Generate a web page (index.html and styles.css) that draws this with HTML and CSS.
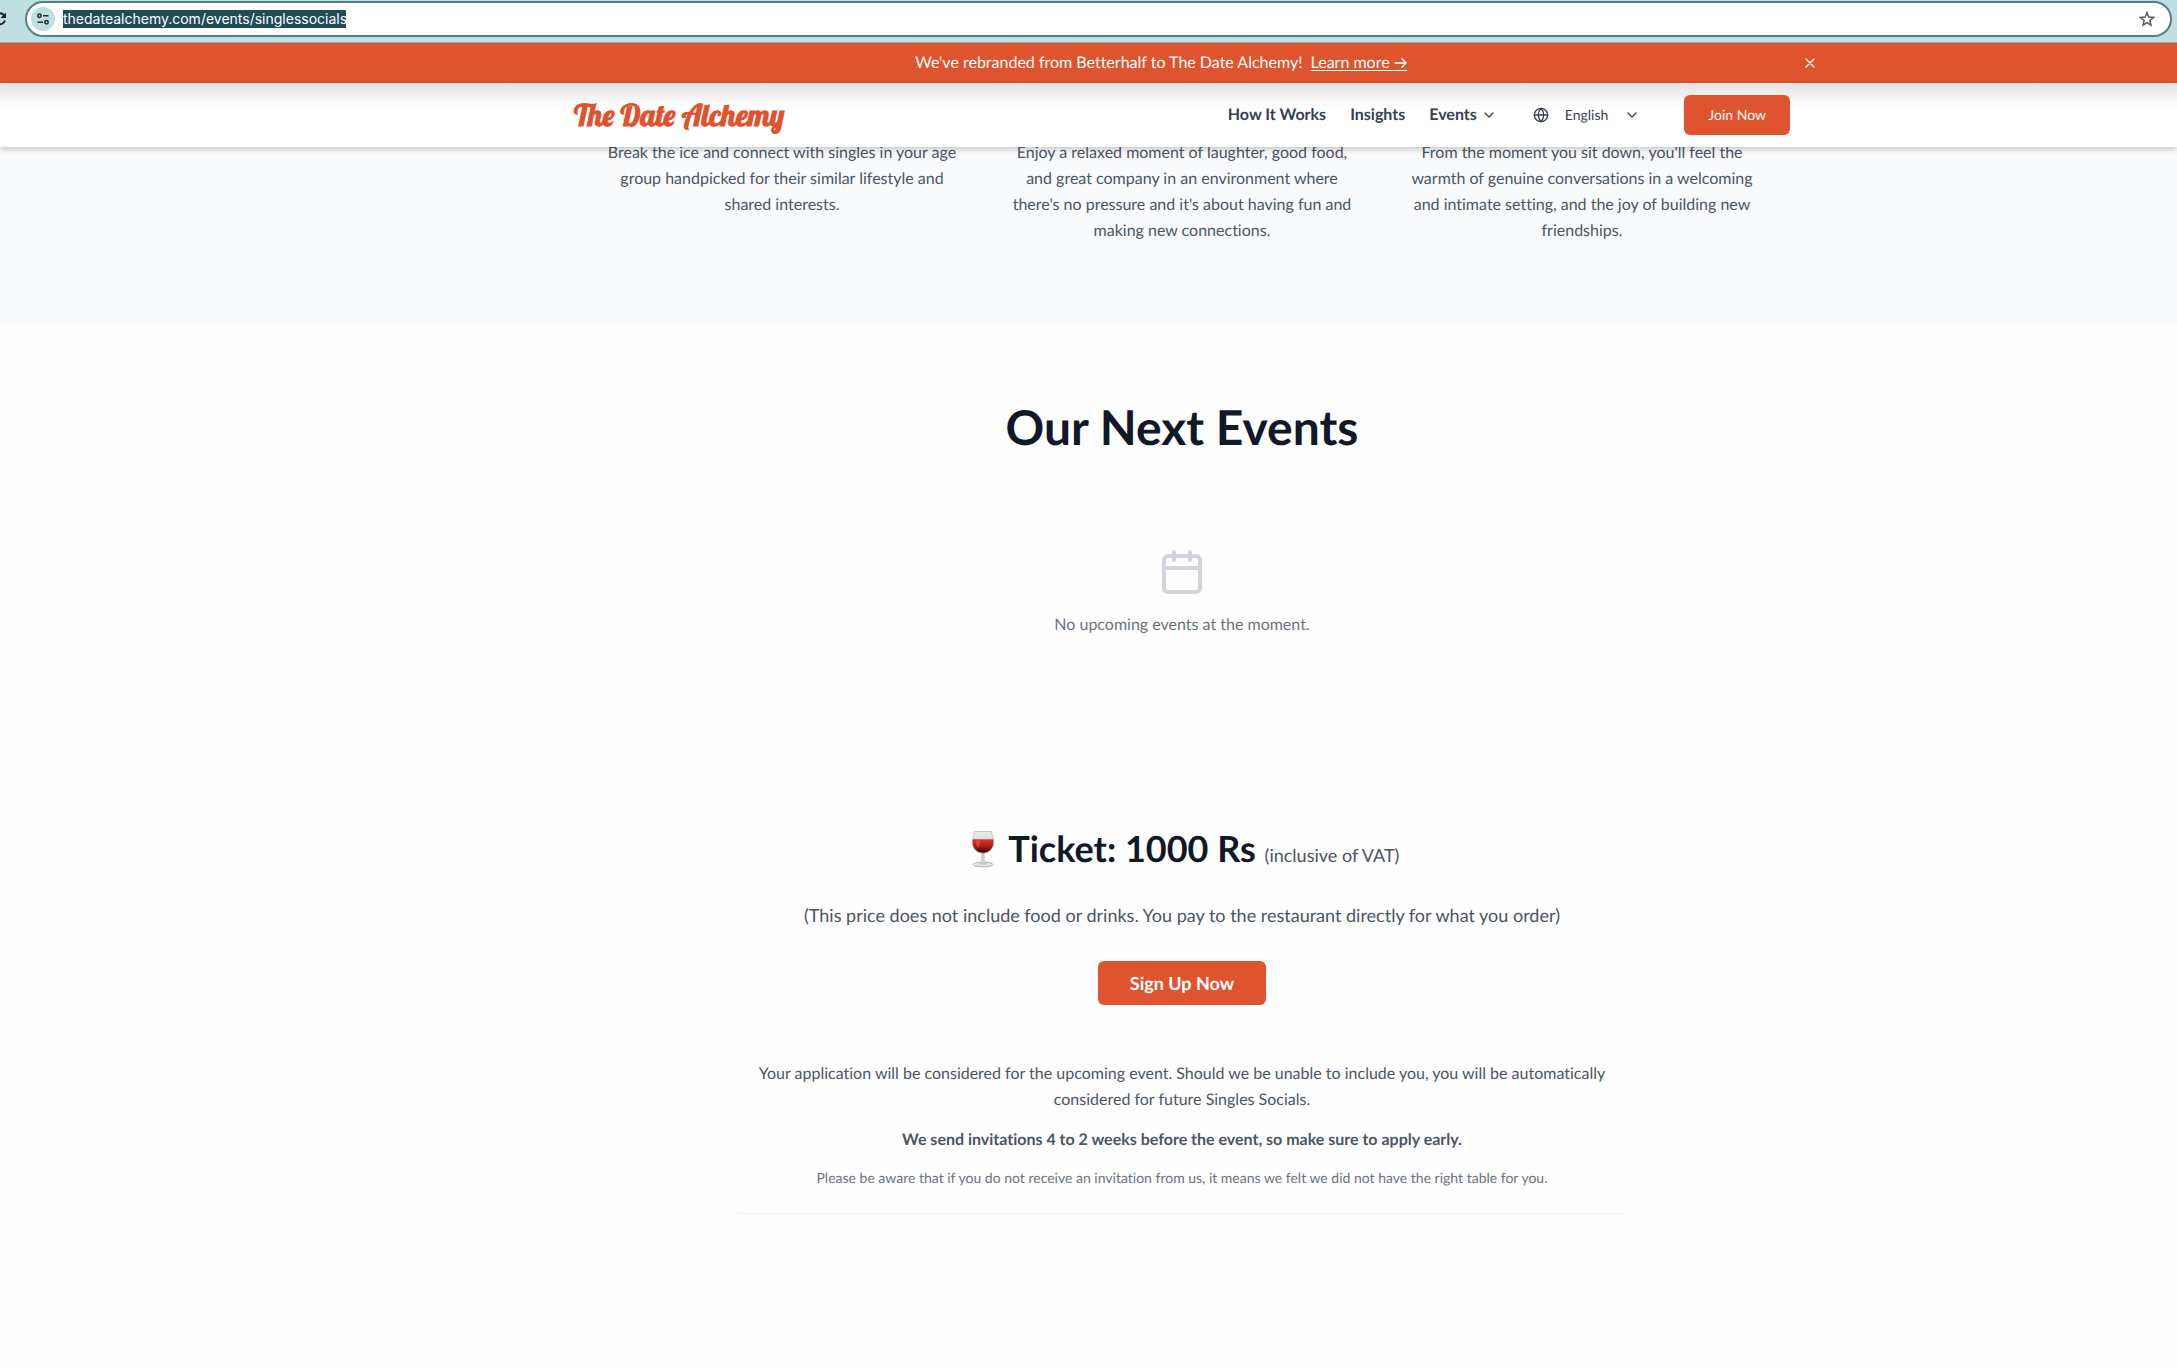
FILE: index.html
```html
<!DOCTYPE html>
<html lang="en">
<head>
<meta charset="utf-8">
<title>Singles Socials | The Date Alchemy</title>
<link rel="stylesheet" href="styles.css">
</head>
<body>
<div class="toolbar">
  <button class="reload" aria-label="Reload">
    <svg width="16" height="16" viewBox="0 0 16 16" fill="none" stroke="#1f1f1f" stroke-width="2"><path d="M13 9.500A5.500 5.500 0 1 1 12 4.200"/><path d="M14 1.500v5.500H8.500z" fill="#1f1f1f" stroke="none"/></svg>
  </button>
  <div class="omnibox">
    <button class="site-info" aria-label="Site information">
      <svg width="14" height="14" viewBox="0 0 14 14" fill="none" stroke="#1f2a2c" stroke-width="1.500"><circle cx="3.500" cy="3.800" r="1.700"/><path d="M7 3.800h5.500M1.500 10.200H7"/><circle cx="10.500" cy="10.200" r="1.700"/></svg>
    </button>
    <input class="url" type="text" aria-label="Address" value="thedatealchemy.com/events/singlessocials">
    <button class="star" aria-label="Bookmark this page">
      <svg width="16" height="16" viewBox="0 0 16 16" fill="none" stroke="#5a5a5a" stroke-width="1.500"><path d="M8 1.800l1.800 4.300 4.700.4-3.600 3 1.100 4.600L8 11.600l-4 2.500 1.100-4.600-3.600-3 4.700-.4z"/></svg>
    </button>
  </div>
</div>

<div class="banner">
  <div class="container banner-row">
    <p class="banner-text">We've rebranded from Betterhalf to The Date Alchemy! <a href="#">Learn more <svg width="13" height="12" viewBox="0 0 13 12" fill="none" stroke="currentColor" stroke-width="1.500" stroke-linecap="round" stroke-linejoin="round"><path d="M1 5h11M8 .8L12 5 8 9.200"/></svg></a></p>
    <button class="close" aria-label="Dismiss">
      <svg width="16" height="16" viewBox="0 0 24 24" fill="none" stroke="currentColor" stroke-width="2" stroke-linecap="round"><path d="M18 6L6 18M6 6l12 12"/></svg>
    </button>
  </div>
</div>

<header class="header">
  <div class="container header-row">
    <a class="logo" href="#">The Date Alchemy</a>
    <nav class="nav">
      <a href="#">How It Works</a>
      <a href="#">Insights</a>
      <button class="nav-menu">Events <svg class="chevron" width="16" height="16" viewBox="0 0 24 24"><path d="M6 9l6 6 6-6"/></svg></button>
      <button class="lang">
        <svg width="16" height="16" viewBox="0 0 24 24" fill="none" stroke="currentColor" stroke-width="2" stroke-linecap="round"><circle cx="12" cy="12" r="10"/><path d="M12 2a14.500 14.500 0 0 0 0 20 14.500 14.500 0 0 0 0-20M2 12h20"/></svg>
        <span>English</span>
        <svg class="chevron" width="16" height="16" viewBox="0 0 24 24"><path d="M6 9l6 6 6-6"/></svg>
      </button>
      <button class="join">Join Now</button>
    </nav>
  </div>
</header>

<main>
  <section class="features">
    <div class="feature-grid">
      <p>Break the ice and connect with singles in your age group handpicked for their similar lifestyle and shared interests.</p>
      <p>Enjoy a relaxed moment of laughter, good food, and great company in an environment where there's no pressure and it's about having fun and making new connections.</p>
      <p>From the moment you sit down, you'll feel the warmth of genuine conversations in a welcoming and intimate setting, and the joy of building new friendships.</p>
    </div>
  </section>

  <section class="events">
    <h2>Our Next Events</h2>
    <div class="empty">
      <svg width="48" height="48" viewBox="0 0 24 24" fill="none" stroke="#d1d5db" stroke-width="2" stroke-linecap="round" stroke-linejoin="round"><rect x="3" y="4" width="18" height="18" rx="2"/><path d="M8 2v4M16 2v4M3 10h18"/></svg>
      <p>No upcoming events at the moment.</p>
    </div>
  </section>

  <section class="ticket">
    <h3>
      <svg class="wine" width="36" height="38" viewBox="0 0 36 38" aria-label="Wine glass" role="img">
        <defs>
          <linearGradient id="bowl" x2="0" y2="1"><stop stop-color="#ececec"/><stop offset="1" stop-color="#c8c8c8"/></linearGradient>
          <linearGradient id="wine" x2="0" y2="1"><stop stop-color="#e4362b"/><stop offset=".5" stop-color="#b01c17"/><stop offset="1" stop-color="#3a0808"/></linearGradient>
        </defs>
        <ellipse cx="18" cy="34.500" rx="10" ry="2.300" fill="#e4e4e4" stroke="#a9a9a9" stroke-width=".8"/>
        <path d="M17 23h2l.4 9 2.100 2h-7l2.100-2z" fill="#d4d4d4" stroke="#a3a3a3" stroke-width=".5"/>
        <path d="M9.500 1.500h17c1 4 2.200 7.500 2.200 11 0 6-4.700 11-10.700 11s-10.700-5-10.700-11c0-3.500 1.200-7 2.200-11z" fill="url(#bowl)" stroke="#b5b5b5" stroke-width=".7"/>
        <path d="M8 9.200h20c.3 1.200.4 2.300.4 3.400 0 5.600-4.500 10.200-10.400 10.200S7.600 18.200 7.600 12.600c0-1.100.1-2.200.4-3.400z" fill="url(#wine)"/>
        <path d="M10.500 10.500h5c-.5 3-1 5-2.200 7.200-2-1.700-3-4-2.800-7.200z" fill="#ef5a4d" opacity=".55"/>
      </svg>
      Ticket: 1000 Rs <span>(inclusive of VAT)</span>
    </h3>
    <p class="price-note">(This price does not include food or drinks. You pay to the restaurant directly for what you order)</p>
    <button class="signup">Sign Up Now</button>
    <div class="notice">
      <p>Your application will be considered for the upcoming event. Should we be unable to include you, you will be automatically considered for future Singles Socials.</p>
      <p class="strong">We send invitations 4 to 2 weeks before the event, so make sure to apply early.</p>
      <p class="small">Please be aware that if you do not receive an invitation from us, it means we felt we did not have the right table for you.</p>
    </div>
  </section>
</main>
</body>
</html>
```
FILE: styles.css
```css
* { box-sizing: border-box; }

:root {
  --orange: #df542f;
  --teal: #bfdfe2;
  /* the page centre sits right of the window centre */
  --shift: 187px;
}

body {
  margin: 0;
  background: #fefefe;
  color: #4b5563;
  font: 16px/26px Lato, "Liberation Sans", sans-serif;
  font-variant-ligatures: no-common-ligatures;
  text-rendering: geometricPrecision;
  overflow-x: hidden;
}

h2, h3, p { margin: 0; }

button {
  border: 0;
  padding: 0;
  background: none;
  color: inherit;
  font: inherit;
  text-rendering: inherit;
  cursor: pointer;
}

a { color: inherit; text-decoration: none; }

svg { flex: none; }

.toolbar {
  display: flex;
  align-items: center;
  gap: 17px;
  height: 43px;
  padding: 0 5px 5px 0;
  background: var(--teal);
  border-bottom: 1px solid #8db2b4;
}

.reload {
  display: flex;
  width: 8px;
  justify-content: flex-end;
}

.omnibox {
  display: flex;
  flex: 1;
  align-items: center;
  gap: 8px;
  height: 36px;
  padding: 0 15px 0 4px;
  background: #fff;
  border: 2px solid #568087;
  border-radius: 18px;
}

.site-info {
  display: flex;
  align-items: center;
  justify-content: center;
  width: 24px;
  height: 24px;
  border-radius: 12px;
  background: var(--teal);
}

.url {
  width: 283px;
  height: 18px;
  padding: 0;
  border: 0;
  outline: 0;
  background: #1f4d54;
  color: #fff;
  font: 14px/18px Inter, "Liberation Sans", sans-serif;
}

.star { display: flex; margin-left: auto; }

.banner {
  padding-left: var(--shift);
  background: var(--orange);
  color: #fff;
}

.container {
  width: 100%;
  max-width: 1280px;
  margin: 0 auto;
  padding: 0 32px;
}

.banner-row {
  display: flex;
  align-items: center;
  gap: 18px;
  height: 40px;
  padding: 0;
}

.banner-text { flex: 1; text-align: center; }

.banner-text a {
  margin-left: 4px;
  text-decoration: underline;
  text-underline-offset: 2px;
}

.banner-text a svg { border-bottom: 1px solid; box-sizing: content-box; vertical-align: -3px; }

.close { display: flex; padding: 4px; }

.header {
  position: relative;
  z-index: 1;
  padding-left: var(--shift);
  background: linear-gradient(#e2e2e2, #fff 24px);
  box-shadow: 0 2px 6px rgb(0 0 0 / 22%);
}

.header-row {
  display: flex;
  align-items: center;
  justify-content: space-between;
  height: 64px;
}

.logo {
  color: var(--orange);
  font: bold 30px/36px Lobster, "Liberation Serif", serif;
  font-variant-ligatures: normal;
}

.nav {
  display: flex;
  align-items: center;
  gap: 24px;
  color: #374151;
  font-weight: 700;
}

.nav-menu, .lang { display: flex; align-items: center; gap: 4px; }

.lang {
  margin: 0 20px 0 12px;
  gap: 16px;
  font-size: 14px;
  font-weight: 400;
}

.chevron {
  fill: none;
  stroke: currentColor;
  stroke-width: 2;
  stroke-linecap: round;
  stroke-linejoin: round;
}

.join {
  height: 40px;
  padding: 0 24px;
  border-radius: 6px;
  background: var(--orange);
  color: #fff;
  font-size: 14px;
  font-weight: 400;
}

/* scrolled partly beneath the header */
.features {
  margin-top: -7px;
  padding: 0 0 80px var(--shift);
  background: #f9fafb;
}

.feature-grid {
  display: grid;
  grid-template-columns: repeat(3, 1fr);
  gap: 48px;
  max-width: 1152px;
  margin: 0 auto;
  text-align: center;
}

.events {
  padding: 80px 0 80px var(--shift);
  text-align: center;
}

h2 {
  color: #111827;
  font-size: 48px;
  line-height: 48px;
}

.empty {
  display: flex;
  flex-direction: column;
  align-items: center;
  gap: 16px;
  padding-top: 96px;
  color: #6b7280;
}

.ticket {
  display: flex;
  flex-direction: column;
  align-items: center;
  padding: 110px 0 156px var(--shift);
  text-align: center;
}

h3 {
  color: #111827;
  font-size: 36px;
  line-height: 40px;
}

h3 span {
  color: #4b5563;
  font-size: 18px;
  font-weight: 400;
}

.wine { vertical-align: -6px; }

.price-note {
  margin: 26px 0 32px;
  font-size: 18px;
  line-height: 28px;
}

.signup {
  height: 44px;
  padding: 0 32px;
  border-radius: 6px;
  background: var(--orange);
  color: #fff;
  font-size: 18px;
  font-weight: 700;
}

.notice {
  display: flex;
  flex-direction: column;
  gap: 14px;
  width: 100%;
  max-width: 896px;
  margin-top: 32px;
  padding: 24px;
  border-radius: 8px;
  box-shadow: 0 1px 2px rgb(0 0 0 / 5%);
}

.strong { font-weight: 700; }

.small {
  color: #6b7280;
  font-size: 14px;
  line-height: 22px;
}
```
